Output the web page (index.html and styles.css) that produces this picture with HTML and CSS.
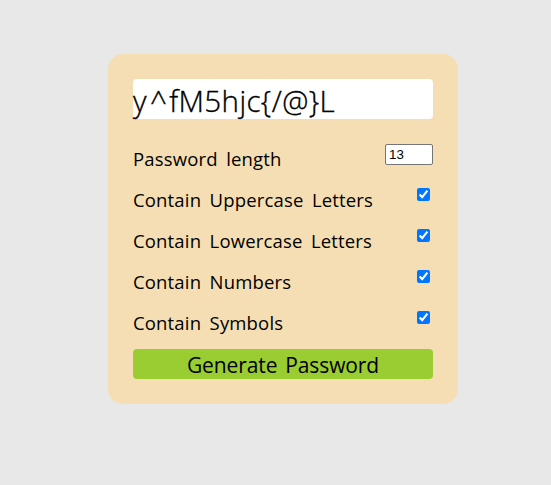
FILE: index.html
```html
<!DOCTYPE html>
<html lang="en">
<head>
<meta charset="utf-8">
<title>Password Generator</title>
<link rel="stylesheet" href="styles.css">
</head>
<body>
<main class="card">
  <div class="result">y<span class="caret">^</span>fM5hjc{/@}L</div>
  <div class="settings">
    <div class="setting"><label for="length">Password length</label><input id="length" class="length" type="number" value="13"></div>
    <div class="setting"><label for="upper">Contain Uppercase Letters</label><input id="upper" type="checkbox" checked></div>
    <div class="setting"><label for="lower">Contain Lowercase Letters</label><input id="lower" type="checkbox" checked></div>
    <div class="setting"><label for="numbers">Contain Numbers</label><input id="numbers" type="checkbox" checked></div>
    <div class="setting"><label for="symbols">Contain Symbols</label><input id="symbols" type="checkbox" checked></div>
  </div>
  <button class="generate" type="button">Generate Password</button>
</main>
</body>
</html>
```

FILE: styles.css
```css
* { box-sizing: border-box; }
body {
  margin: 0;
  padding: 54px 0 0 108px;
  background: #e8e8e8;
  color: #000;
  font-family: "Open Sans", "Noto Sans", sans-serif;
}
.card {
  width: 350px;
  height: 350px;
  padding: 25px;
  border-radius: 15px;
  background: wheat;
}
.result {
  height: 40px;
  border-radius: 4px;
  background: #fff;
  font-size: 29.5px;
  font-weight: 300;
  -webkit-text-stroke: 0.35px #000;
  line-height: 44px;
  letter-spacing: 0.4px;
  white-space: nowrap;
}
.caret { margin: 0 2px 0 3px; }
.settings { padding-top: 25px; }
.setting {
  display: flex;
  justify-content: space-between;
  align-items: flex-start;
  height: 41px;
  font-size: 18.5px;
  font-weight: 400;
  line-height: 29px;
  letter-spacing: 0.16px;
  word-spacing: 3.5px;
  white-space: nowrap;
}
.length {
  width: 48px;
  height: 21px;
  margin: 0;
  padding: 1px 3px;
  border: 1px solid #767676;
  border-radius: 2px;
  font: 13.333px "Liberation Sans", sans-serif;
  letter-spacing: 0;
}
input[type="checkbox"] { width: 13px; height: 13px; margin: 3px 3px 3px 4px; }
.generate {
  display: block;
  width: 100%;
  height: 30px;
  padding: 2px 0 0;
  border: 0;
  border-radius: 4px;
  background: yellowgreen;
  color: #000;
  font: 400 21px/28px "Open Sans", "Noto Sans", sans-serif;
  letter-spacing: -0.1px;
  word-spacing: 2.5px;
}
```
